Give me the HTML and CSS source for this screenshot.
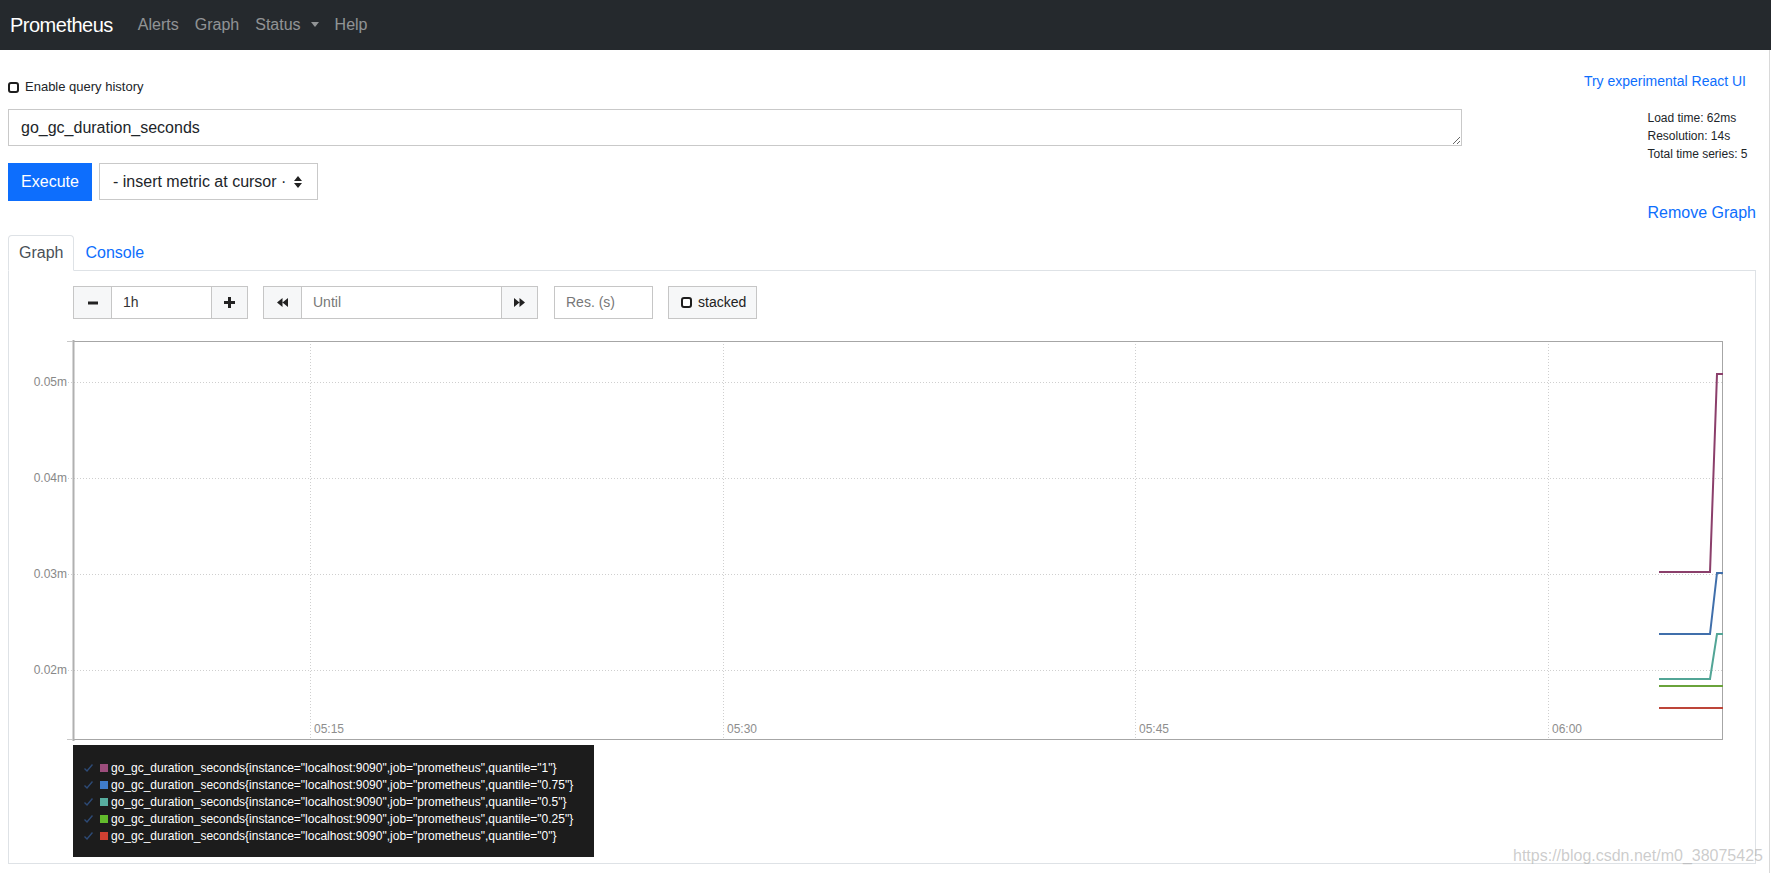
FILE: index.html
```html
<!DOCTYPE html>
<html>
<head>
<meta charset="utf-8">
<title>Prometheus Time Series Collection and Processing Server</title>
<link rel="stylesheet" href="styles.css">
</head>
<body>
<nav class="navbar">
  <a class="brand">Prometheus</a>
  <ul class="nav">
    <li><a>Alerts</a></li>
    <li><a>Graph</a></li>
    <li><a class="dropdown">Status</a></li>
    <li><a>Help</a></li>
  </ul>
</nav>
<main class="page">
  <div class="toprow">
    <label class="history"><span class="check"></span>Enable query history</label>
    <a class="react-link">Try experimental React UI</a>
  </div>
  <div class="query-row">
    <div class="query-col">
      <textarea class="expr" rows="1">go_gc_duration_seconds</textarea>
      <div class="exec-row">
        <button class="execute">Execute</button>
        <div class="select">- insert metric at cursor ·
          <svg class="updown" width="8" height="12" viewBox="0 0 8 12"><path d="M0 5 L4 0 L8 5 Z M0 7 L8 7 L4 12 Z" fill="#222"/></svg>
        </div>
      </div>
    </div>
    <div class="side-col">
      <div class="stats">Load time: 62ms<br>Resolution: 14s<br>Total time series: 5</div>
      <a class="remove">Remove Graph</a>
    </div>
  </div>
  <div class="tabs">
    <a class="tab active">Graph</a>
    <a class="tab">Console</a>
  </div>
  <div class="panel">
    <div class="controls">
      <div class="igroup">
        <div class="btn-ctl w39"><svg width="10" height="4" viewBox="0 0 10 4"><rect x="0" y="0.5" width="10" height="3" fill="#222"/></svg></div>
        <div class="inp w100">1h</div>
        <div class="btn-ctl w37"><svg width="11" height="11" viewBox="0 0 11 11"><rect x="0" y="4" width="11" height="3" fill="#222"/><rect x="4" y="0" width="3" height="11" fill="#222"/></svg></div>
      </div>
      <div class="igroup g2">
        <div class="btn-ctl w39"><svg width="11" height="9" viewBox="0 0 11 9"><path d="M5.5 0 L0 4.5 L5.5 9 Z M11 0 L5.5 4.5 L11 9 Z" fill="#222"/></svg></div>
        <div class="inp w200 ph">Until</div>
        <div class="btn-ctl w37"><svg width="11" height="9" viewBox="0 0 11 9"><path d="M0 0 L5.5 4.5 L0 9 Z M5.5 0 L11 4.5 L5.5 9 Z" fill="#222"/></svg></div>
      </div>
      <div class="inp res ph">Res. (s)</div>
      <div class="stacked"><span class="check"></span>stacked</div>
    </div>
    <svg class="chart" width="1720" height="406" viewBox="9 335 1720 406">
      <g stroke="#cfcfcf" stroke-width="1" stroke-dasharray="1 2">
        <line x1="68" y1="382.5" x2="1723" y2="382.5"/>
        <line x1="68" y1="478.5" x2="1723" y2="478.5"/>
        <line x1="68" y1="574.5" x2="1723" y2="574.5"/>
        <line x1="68" y1="670.5" x2="1723" y2="670.5"/>
        <line x1="310.5" y1="341" x2="310.5" y2="740"/>
        <line x1="723.5" y1="341" x2="723.5" y2="740"/>
        <line x1="1135.5" y1="341" x2="1135.5" y2="740"/>
        <line x1="1548.5" y1="341" x2="1548.5" y2="740"/>
      </g>
      <rect x="73.5" y="341.5" width="1649" height="398" fill="none" stroke="#a6a6a6"/>
      <line x1="73.5" y1="340" x2="73.5" y2="741" stroke="#b0b0b0" stroke-width="2"/>
      <line x1="67" y1="341.5" x2="73" y2="341.5" stroke="#c8c8c8"/>
      <line x1="67" y1="739.5" x2="73" y2="739.5" stroke="#c8c8c8"/>
      <g font-family="Liberation Sans, Arial, sans-serif" font-size="12" fill="#888" text-anchor="end">
        <text x="67" y="386">0.05m</text>
        <text x="67" y="482">0.04m</text>
        <text x="67" y="578">0.03m</text>
        <text x="67" y="674">0.02m</text>
      </g>
      <g font-family="Liberation Sans, Arial, sans-serif" font-size="12" fill="#8e8e8e">
        <text x="314" y="733">05:15</text>
        <text x="727" y="733">05:30</text>
        <text x="1139" y="733">05:45</text>
        <text x="1552" y="733">06:00</text>
      </g>
      <g fill="none" stroke-width="2" stroke-linejoin="miter">
        <polyline points="1659,708 1723,708" stroke="#bd4539"/>
        <polyline points="1659,686 1723,686" stroke="#6aa33b"/>
        <polyline points="1659,679 1710,679 1717,634 1723,634" stroke="#52a596"/>
        <polyline points="1659,634 1710,634 1717,573 1723,573" stroke="#406fab"/>
        <polyline points="1659,572 1710,572 1717,374 1723,374" stroke="#8b3f6b"/>
      </g>
    </svg>
    <div class="legend">
      <div class="lrow"><svg class="lcheck" width="9" height="8" viewBox="0 0 9 8"><path d="M0.5 4.5 L3 7 L8.5 0.5" fill="none" stroke="#2d4a76" stroke-width="1.4"/></svg><span class="swatch purple"></span>go_gc_duration_seconds{instance="localhost:9090",job="prometheus",quantile="1"}</div>
      <div class="lrow"><svg class="lcheck" width="9" height="8" viewBox="0 0 9 8"><path d="M0.5 4.5 L3 7 L8.5 0.5" fill="none" stroke="#2d4a76" stroke-width="1.4"/></svg><span class="swatch blue"></span>go_gc_duration_seconds{instance="localhost:9090",job="prometheus",quantile="0.75"}</div>
      <div class="lrow"><svg class="lcheck" width="9" height="8" viewBox="0 0 9 8"><path d="M0.5 4.5 L3 7 L8.5 0.5" fill="none" stroke="#2d4a76" stroke-width="1.4"/></svg><span class="swatch teal"></span>go_gc_duration_seconds{instance="localhost:9090",job="prometheus",quantile="0.5"}</div>
      <div class="lrow"><svg class="lcheck" width="9" height="8" viewBox="0 0 9 8"><path d="M0.5 4.5 L3 7 L8.5 0.5" fill="none" stroke="#2d4a76" stroke-width="1.4"/></svg><span class="swatch green"></span>go_gc_duration_seconds{instance="localhost:9090",job="prometheus",quantile="0.25"}</div>
      <div class="lrow"><svg class="lcheck" width="9" height="8" viewBox="0 0 9 8"><path d="M0.5 4.5 L3 7 L8.5 0.5" fill="none" stroke="#2d4a76" stroke-width="1.4"/></svg><span class="swatch red"></span>go_gc_duration_seconds{instance="localhost:9090",job="prometheus",quantile="0"}</div>
    </div>
  </div>
  <div class="watermark">https://blog.csdn.net/m0_38075425</div>
</main>
</body>
</html>
```
FILE: styles.css
```css
* { box-sizing: border-box; }
html, body { margin: 0; padding: 0; }
body {
  font-family: "Liberation Sans", Arial, Helvetica, sans-serif;
  color: #212529;
  background: #fff;
  font-size: 16px;
  line-height: 1.5;
  width: 1771px;
  overflow: hidden;
}
a { text-decoration: none; cursor: pointer; }

.navbar {
  height: 50px;
  background: #25292d;
  display: flex;
  align-items: center;
  padding: 0 0 0 10px;
}
.brand {
  color: #fff;
  font-size: 20px;
  line-height: 30px;
  letter-spacing: -0.5px;
  margin-right: 17px;
}
.nav { display: flex; list-style: none; margin: 0; padding: 0; }
.nav a {
  display: block;
  color: rgba(255, 255, 255, 0.5);
  padding: 0 8px;
  line-height: 24px;
}
.dropdown::after {
  content: "";
  display: inline-block;
  margin-left: 10px;
  vertical-align: 3px;
  border-top: 5px solid;
  border-left: 4px solid transparent;
  border-right: 4px solid transparent;
}

.page {
  position: relative;
  width: 1770px;
  height: 823px;
  border-right: 1px solid #d9d9d9;
  padding: 0 13px 0 8px;
}

.check {
  display: inline-block;
  width: 11px;
  height: 11px;
  border: 2px solid #1d1d1d;
  border-radius: 3px;
  background: #fff;
}

.toprow {
  height: 59px;
  display: flex;
  justify-content: space-between;
  align-items: flex-start;
}
.history {
  display: flex;
  align-items: center;
  font-size: 13px;
  line-height: 18px;
  margin-top: 28px;
}
.history .check { margin-right: 6px; }
.react-link {
  font-size: 14px;
  line-height: 20px;
  margin-top: 21px;
  margin-right: 10px;
  color: #0d6efd;
}

.query-row { display: flex; }
.query-col { width: 1455px; }
.expr {
  display: block;
  margin: 0;
  width: 1454px;
  height: 37px;
  border: 1px solid #c9c9c9;
  border-radius: 0;
  padding: 6px 12px 0;
  font-family: "Liberation Sans", Arial, Helvetica, sans-serif;
  font-size: 16px;
  line-height: 24px;
  color: #212529;
  resize: vertical;
  overflow: hidden;
  outline: none;
}
.exec-row { display: flex; margin-top: 17px; }
.execute {
  width: 84px;
  height: 38px;
  background: #0d6efd;
  color: #fff;
  border: 0;
  border-radius: 0;
  padding: 0;
  font-family: "Liberation Sans", Arial, Helvetica, sans-serif;
  font-size: 16px;
}
.select {
  margin-left: 7px;
  width: 219px;
  height: 37px;
  border: 1px solid #c9c9c9;
  display: flex;
  align-items: center;
  padding-left: 13px;
  font-size: 16px;
  color: #212529;
  white-space: nowrap;
  overflow: hidden;
}
.updown { margin-left: 8px; flex: none; }

.side-col { flex: 1; padding-left: 185px; }
.stats { font-size: 12px; line-height: 18px; color: #212529; white-space: nowrap; }
.remove {
  display: block;
  margin-top: 38px;
  font-size: 16px;
  line-height: 24px;
  color: #0d6efd;
  white-space: nowrap;
}

.tabs {
  display: flex;
  margin-top: 10px;
  border-bottom: 1px solid #dee2e6;
}
.tab {
  padding: 7px 10px;
  line-height: 20px;
  border: 1px solid transparent;
  border-radius: 4px 4px 0 0;
  margin-bottom: -1px;
  color: #0d6efd;
}
.tab.active {
  color: #495057;
  background: #fff;
  border-color: #dee2e6 #dee2e6 #fff;
}

.panel {
  border: 1px solid #dee2e6;
  border-top: 0;
  padding: 15px 0 6px 0;
}
.controls {
  display: flex;
  margin-left: 64px;
  height: 33px;
  font-size: 14px;
}
.igroup { display: flex; }
.igroup.g2 { margin-left: 15px; }
.btn-ctl {
  height: 33px;
  background: #f6f7f8;
  border: 1px solid #c6c6c6;
  display: flex;
  align-items: center;
  justify-content: center;
}
.btn-ctl + .inp, .inp + .btn-ctl { margin-left: -1px; }
.w39 { width: 39px; }
.w37 { width: 37px; }
.inp {
  height: 33px;
  border: 1px solid #c6c6c6;
  background: #fff;
  padding-left: 11px;
  display: flex;
  align-items: center;
  color: #333;
}
.w100 { width: 101px; }
.w200 { width: 201px; }
.ph { color: #777; }
.res { width: 99px; margin-left: 16px; padding-left: 11px; }
.stacked {
  margin-left: 15px;
  width: 89px;
  height: 33px;
  background: #f6f7f8;
  border: 1px solid #c6c6c6;
  display: flex;
  align-items: center;
  padding-left: 12px;
  color: #222;
}
.stacked .check { margin-right: 6px; }

.chart { display: block; margin-top: 16px; }

.legend {
  margin: 4px 0 0 64px;
  width: 521px;
  height: 112px;
  background: #1c1c1c;
  padding: 14px 0 13px 11px;
}
.lrow {
  display: flex;
  align-items: center;
  height: 17px;
  font-size: 12px;
  color: #fff;
  white-space: nowrap;
}
.lcheck { margin-right: 7px; flex: none; }
.swatch { width: 8px; height: 8px; margin-right: 3px; flex: none; }
.purple { background: #9c4d7c; }
.blue { background: #3f7ccb; }
.teal { background: #57ae9f; }
.green { background: #62bb2c; }
.red { background: #cf4031; }

.watermark {
  position: absolute;
  left: 1513px;
  top: 796px;
  font-size: 16px;
  line-height: 20px;
  color: rgba(170, 170, 170, 0.6);
  white-space: nowrap;
}
```
